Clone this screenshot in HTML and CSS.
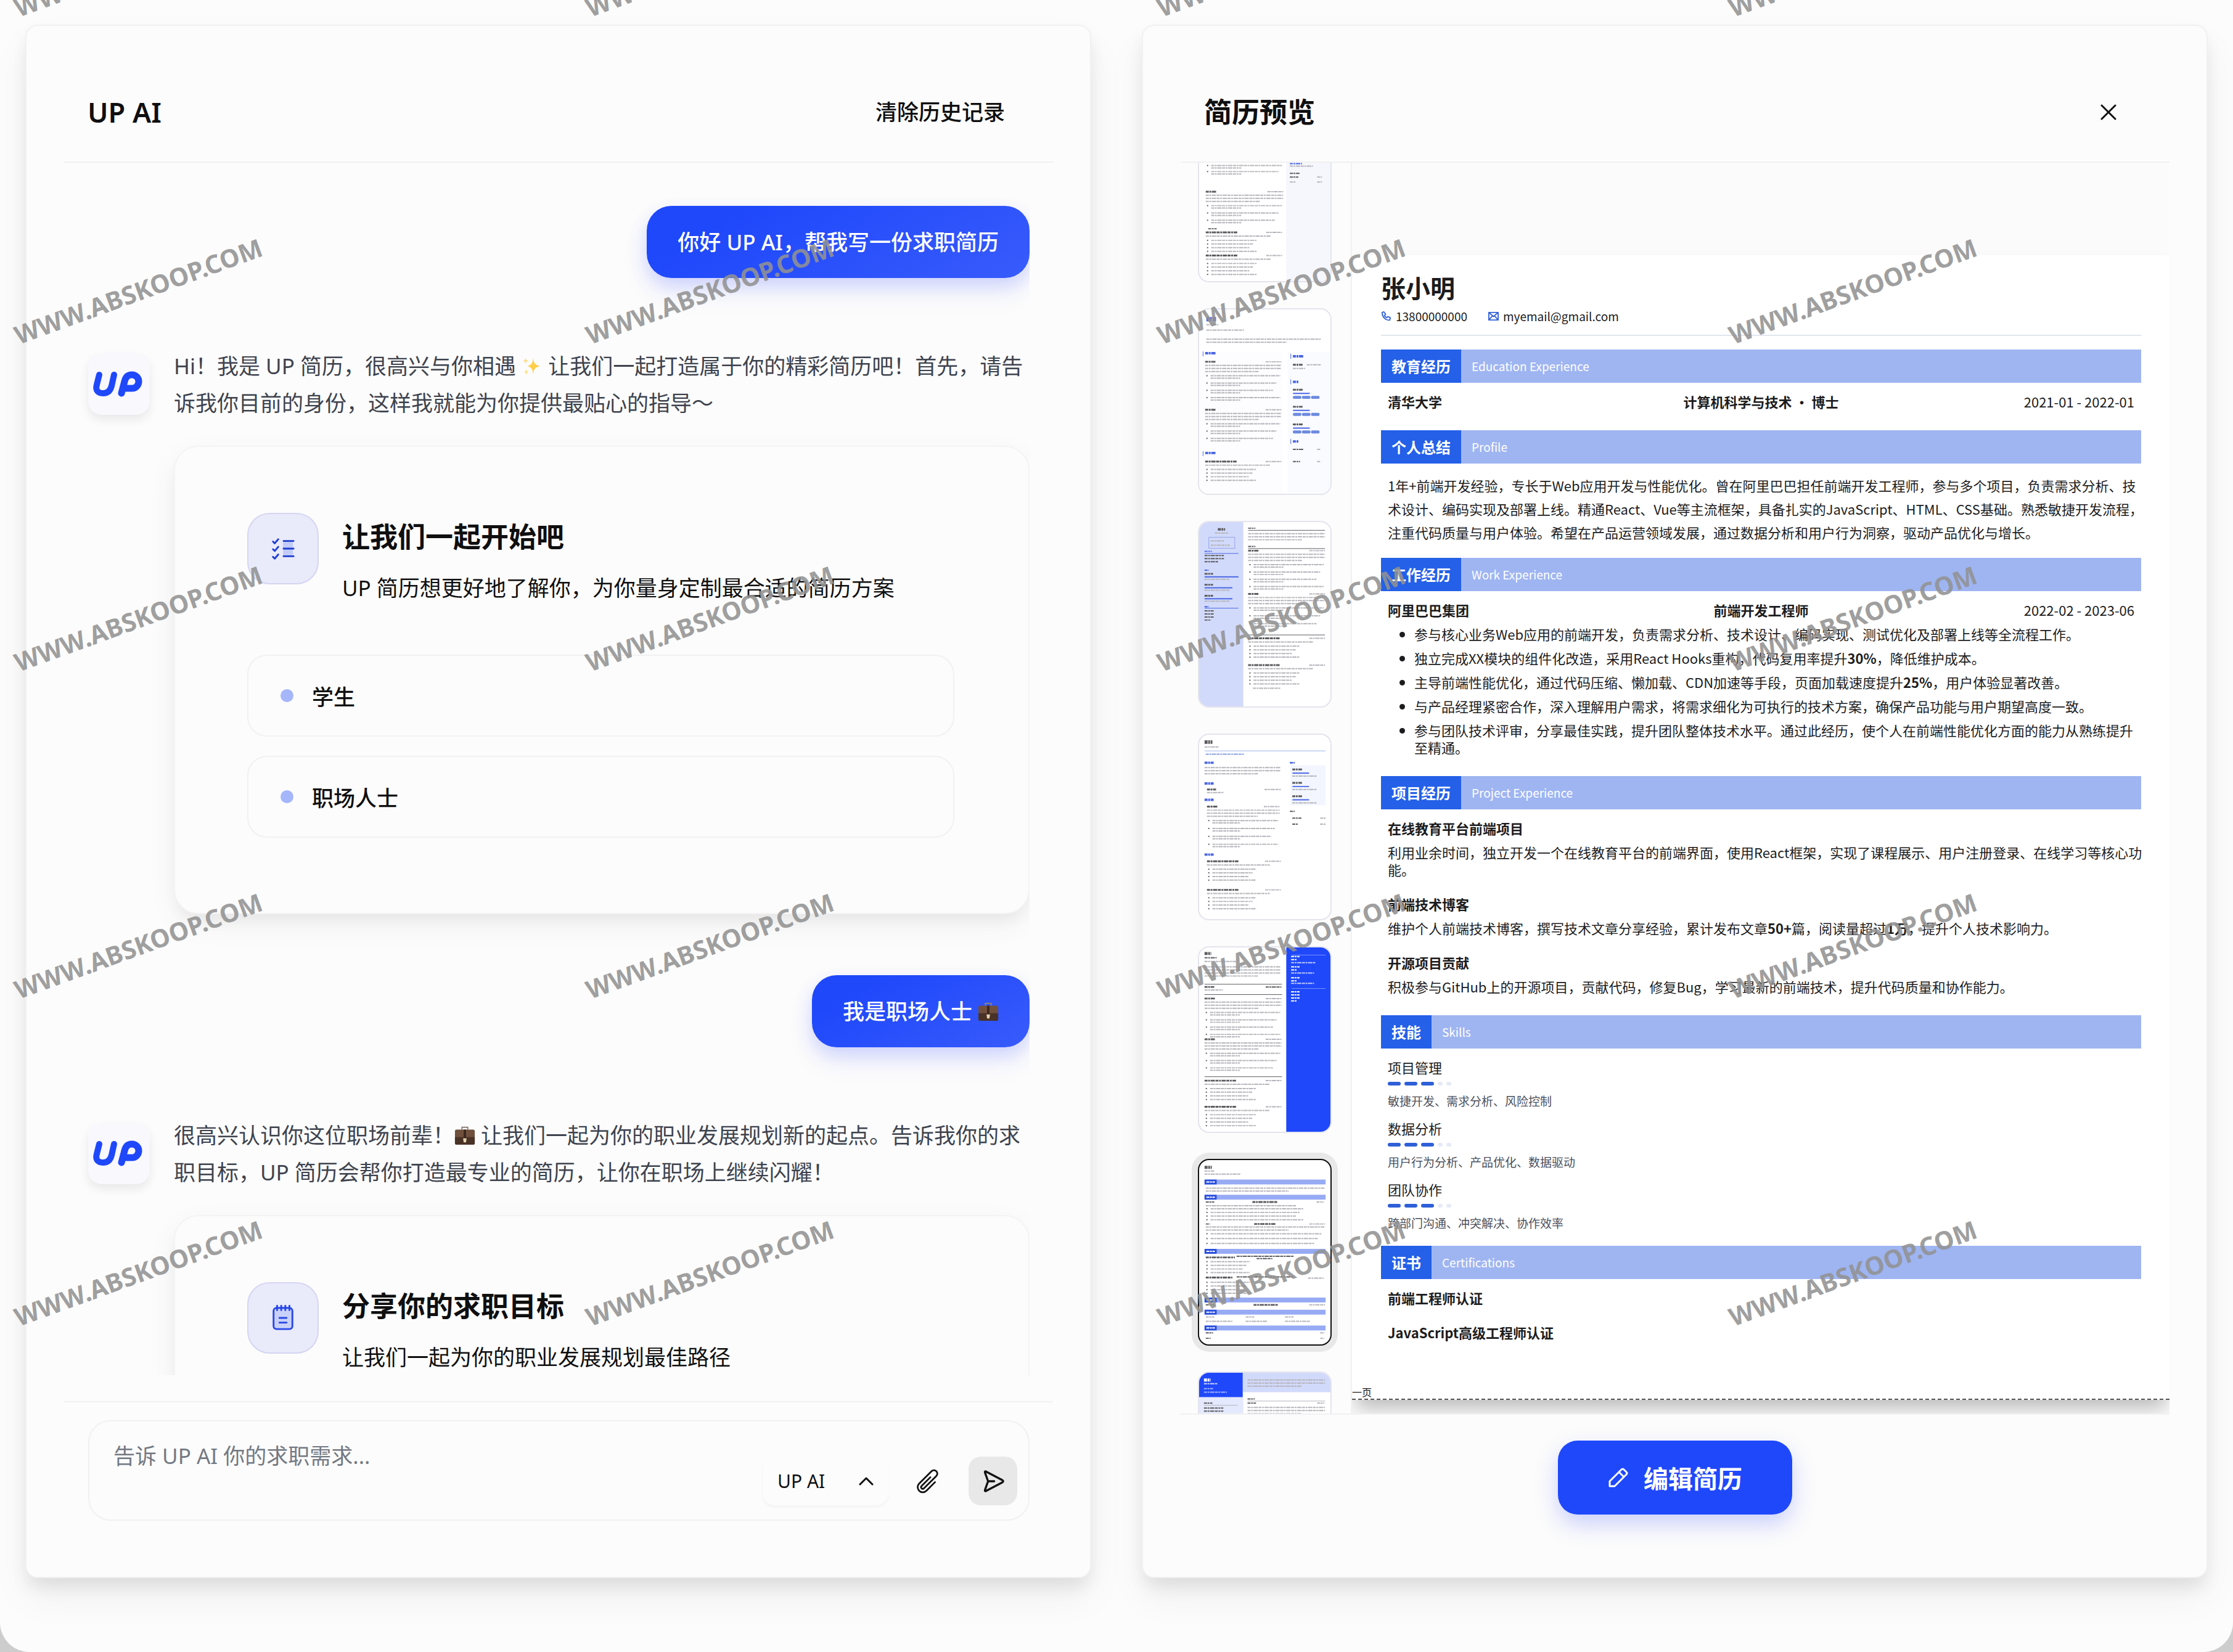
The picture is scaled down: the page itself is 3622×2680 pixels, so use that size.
FILE: index.html
```html
<!DOCTYPE html>
<html lang="zh-CN">
<head>
  <meta charset="UTF-8" />
  <meta name="viewport" content="width=device-width, initial-scale=1.0"/>
  <title>UP AI 简历</title>
  <link rel="stylesheet" href="styles.css">
</head>
<body>

  <!-- 共用图形 -->
  <svg class="defs" aria-hidden="true">
    <symbol id="logo" viewBox="0 0 100 100">
      <g fill="none" stroke="#1f48fb" stroke-linecap="round">
        <path d="M18 35 L14 51 C11 61 17 65 24 65 C31 65 36 61 38 53 L42 35" stroke-width="10"/>
        <path d="M54 65 L59 46 C61 37 66 35 71 35 A11 11 0 1 1 71 57 L62 57" stroke-width="11"/>
      </g>
    </symbol>
    <symbol id="case" viewBox="0 0 36 36">
      <path d="M13 8V4h10v4" fill="none" stroke="#8b8178" stroke-width="2"/>
      <rect x="1" y="8" width="34" height="26" rx="3" fill="#70503c"/>
      <path d="M1 21h34v10a3 3 0 0 1-3 3H4a3 3 0 0 1-3-3z" fill="#4a3227"/>
      <path d="M16 8h4v14h-4z" fill="#3a2820"/>
      <path d="M15 23h6l-1 7h-4z" fill="#e6d3b0"/>
    </symbol>
  </svg>

  <main class="app">
    <section class="panel">
      <header class="panel-head">
        <h1>UP AI</h1>
        <button class="clear-btn" type="button">清除历史记录</button>
      </header>

      <div class="chat">
        <div class="bubble">你好 UP AI，帮我写一份求职简历</div>

        <div class="reply">
          <svg class="avatar" role="img" aria-label="UP"><use href="#logo"/></svg>
          <div class="reply-body">
            <p>Hi！我是 UP 简历，很高兴与你相遇 <svg class="emoji" viewBox="0 0 36 36" aria-hidden="true"><path d="M20 4c1 9 3 12 12 14c-9 2-11 5-12 14c-1-9-3-12-10-14c7-2 9-5 10-14z" fill="#ffcf4a"/><path d="M7 3c.6 4 1.400 5 5 6c-3.600 1-4.400 2-5 6c-.6-4-1.400-5-5-6c3.600-1 4.400-2 5-6zM8 22c.5 4 1 5 4 6c-3 1-3.500 2-4 6c-.5-4-1-5-4-6c3-1 3.500-2 4-6z" fill="#ffe08a"/></svg> 让我们一起打造属于你的精彩简历吧！首先，请告诉我你目前的身份，这样我就能为你提供最贴心的指导～</p>
            <div class="card">
              <div class="card-head">
                <span class="card-icon">
                  <svg viewBox="0 0 44 44" fill="none" stroke="#1f3fd0" stroke-width="3" stroke-linecap="round" stroke-linejoin="round">
                    <path d="M22 9h17v26H22z" fill="#c3ccf8" stroke="none"/>
                    <path d="M23 9h17M23 22h17M23 35h17M5 10l3 3l6-7M5 23l3 3l6-7M5 36l3 3l6-7"/>
                  </svg>
                </span>
                <div>
                  <h2>让我们一起开始吧</h2>
                  <div class="card-desc">UP 简历想更好地了解你，为你量身定制最合适的简历方案</div>
                </div>
              </div>
              <div class="options">
                <button class="option" type="button"><i class="dot"></i>学生</button>
                <button class="option" type="button"><i class="dot"></i>职场人士</button>
              </div>
            </div>
          </div>
        </div>

        <div class="bubble">我是职场人士 <svg class="emoji" role="img" aria-label="公文包"><use href="#case"/></svg></div>

        <div class="reply">
          <svg class="avatar" role="img" aria-label="UP"><use href="#logo"/></svg>
          <div class="reply-body">
            <p>很高兴认识你这位职场前辈！<svg class="emoji" role="img" aria-label="公文包"><use href="#case"/></svg> 让我们一起为你的职业发展规划新的起点。告诉我你的求职目标，UP 简历会帮你打造最专业的简历，让你在职场上继续闪耀！</p>
            <div class="card">
              <div class="card-head">
                <span class="card-icon">
                  <svg viewBox="0 0 44 44" fill="none" stroke="#2747e6" stroke-width="3" stroke-linecap="round" stroke-linejoin="round">
                    <rect x="6" y="5" width="32" height="36" rx="5" fill="#c9d1fa"/>
                    <path d="M12 1v8M19 1v8M26 1v8M33 1v8M16 22h12M16 30h12"/>
                  </svg>
                </span>
                <div>
                  <h2>分享你的求职目标</h2>
                  <div class="card-desc">让我们一起为你的职业发展规划最佳路径</div>
                </div>
              </div>
            </div>
          </div>
        </div>
      </div>

      <form class="composer">
        <div class="composer-box">
          <textarea aria-label="求职需求" placeholder="告诉 UP AI 你的求职需求..."></textarea>
          <div class="tools">
            <label class="model">
              <select aria-label="模型"><option>UP AI</option></select>
              <svg viewBox="0 0 24 24" fill="none" stroke="#111" stroke-width="3" stroke-linecap="round" stroke-linejoin="round"><path d="M2 17L12 7l10 10"/></svg>
            </label>
            <button class="tool-btn" type="button" aria-label="添加附件">
              <svg viewBox="0 0 24 24" fill="none" stroke="#111" stroke-width="1.500" stroke-linecap="round" stroke-linejoin="round"><path d="M18.375 12.739l-7.693 7.693a4.500 4.500 0 0 1-6.364-6.364l10.940-10.940A3 3 0 1 1 19.500 7.372L8.552 18.320a1.500 1.500 0 0 1-2.112-2.130l7.810-7.810"/></svg>
            </button>
            <button class="tool-btn send" type="button" aria-label="发送">
              <svg viewBox="0 0 24 24" fill="none" stroke="#111" stroke-width="2" stroke-linecap="round" stroke-linejoin="round"><path d="M7 12L4 3.500Q3.600 2 5 2.500L21 11Q22.500 12 21 13L5 21.500Q3.600 22 4 20.500L7 12h6"/></svg>
            </button>
          </div>
        </div>
      </form>
    </section>

    <section class="panel">
      <header class="panel-head">
        <h1>简历预览</h1>
        <button class="close-btn" type="button" aria-label="关闭">
          <svg viewBox="0 0 26 26" stroke="#111" stroke-width="3" stroke-linecap="round"><path d="M2 2l22 22M24 2L2 24"/></svg>
        </button>
      </header>

      <div class="preview">
        <div class="thumbs"><div class="thumb-list" id="thumbs"></div></div>

        <div class="canvas">
          <article class="paper">
            <h2 class="name">张小明</h2>
            <div class="contact">
              <span><svg viewBox="0 0 18 18" fill="none" stroke="#3563d8" stroke-width="2" stroke-linejoin="round"><path d="M2 2l3-1l3 4l-2 2q1 3 4 4l2-2l4 2l-1 4q-5 1-9-3t-4-10z"/></svg>13800000000</span>
              <span><svg viewBox="0 0 18 18" fill="none" stroke="#3563d8" stroke-width="2" stroke-linejoin="round"><path d="M1 2h16v13H1zM1 2l8 7l8-7M1 15l6-7M17 15l-6-7"/></svg>myemail@gmail.com</span>
            </div>

            <h3 class="band"><b>教育经历</b><span>Education Experience</span></h3>
            <div class="block">
              <div class="row"><b>清华大学</b><b>计算机科学与技术 ・ 博士</b><span>2021-01 - 2022-01</span></div>
            </div>

            <h3 class="band"><b>个人总结</b><span>Profile</span></h3>
            <div class="block tight">
              <p class="summary">1年+前端开发经验，专长于Web应用开发与性能优化。曾在阿里巴巴担任前端开发工程师，参与多个项目，负责需求分析、技<br>术设计、编码实现及部署上线。精通React、Vue等主流框架，具备扎实的JavaScript、HTML、CSS基础。熟悉敏捷开发流程，<br>注重代码质量与用户体验。希望在产品运营领域发展，通过数据分析和用户行为洞察，驱动产品优化与增长。</p>
            </div>

            <h3 class="band"><b>工作经历</b><span>Work Experience</span></h3>
            <div class="block">
              <div class="row"><b>阿里巴巴集团</b><b>前端开发工程师</b><span>2022-02 - 2023-06</span></div>
              <ul>
                <li>参与核心业务Web应用的前端开发，负责需求分析、技术设计、编码实现、测试优化及部署上线等全流程工作。</li>
                <li>独立完成XX模块的组件化改造，采用React Hooks重构，代码复用率提升<b>30%</b>，降低维护成本。</li>
                <li>主导前端性能优化，通过代码压缩、懒加载、CDN加速等手段，页面加载速度提升<b>25%</b>，用户体验显著改善。</li>
                <li>与产品经理紧密合作，深入理解用户需求，将需求细化为可执行的技术方案，确保产品功能与用户期望高度一致。</li>
                <li>参与团队技术评审，分享最佳实践，提升团队整体技术水平。通过此经历，使个人在前端性能优化方面的能力从熟练提升<br>至精通。</li>
              </ul>
            </div>

            <h3 class="band"><b>项目经历</b><span>Project Experience</span></h3>
            <div class="block list">
              <div class="item">
                <b>在线教育平台前端项目</b>
                <p>利用业余时间，独立开发一个在线教育平台的前端界面，使用React框架，实现了课程展示、用户注册登录、在线学习等核心功<br>能。</p>
              </div>
              <div class="item">
                <b>前端技术博客</b>
                <p>维护个人前端技术博客，撰写技术文章分享经验，累计发布文章<b>50+</b>篇，阅读量超过<b>1万</b>，提升个人技术影响力。</p>
              </div>
              <div class="item">
                <b>开源项目贡献</b>
                <p>积极参与GitHub上的开源项目，贡献代码，修复Bug，学习最新的前端技术，提升代码质量和协作能力。</p>
              </div>
            </div>

            <h3 class="band"><b>技能</b><span>Skills</span></h3>
            <div class="block tight skills">
              <div class="skill">
                <div>项目管理</div>
                <div class="level"><i></i><i></i><i></i><i class="off"></i><i class="off"></i></div>
                <small>敏捷开发、需求分析、风险控制</small>
              </div>
              <div class="skill">
                <div>数据分析</div>
                <div class="level"><i></i><i></i><i></i><i class="off"></i><i class="off"></i></div>
                <small>用户行为分析、产品优化、数据驱动</small>
              </div>
              <div class="skill">
                <div>团队协作</div>
                <div class="level"><i></i><i></i><i></i><i class="off"></i><i class="off"></i></div>
                <small>跨部门沟通、冲突解决、协作效率</small>
              </div>
            </div>

            <h3 class="band"><b>证书</b><span>Certifications</span></h3>
            <div class="block list">
              <b>前端工程师认证</b>
              <b>JavaScript高级工程师认证</b>
            </div>

            <div class="page-end">一页</div>
          </article>
        </div>
      </div>

      <footer class="panel-foot">
        <button class="edit-btn" type="button">
          <svg viewBox="0 0 34 34" fill="none" stroke="#fff" stroke-width="3" stroke-linejoin="round"><path d="M3 31v-8L22 4q2-2 4 0l4 4q2 2 0 4L11 31zM18 8l8 8"/></svg>
          编辑简历
        </button>
      </footer>
    </section>
  </main>

  <div class="watermarks" id="watermarks" aria-hidden="true"></div>

  <script src="script.js"></script>
</body>
</html>
```
FILE: styles.css
```css
* {
  box-sizing: border-box;
}

body {
  margin: 0;
  position: relative;
  background-color: #cdcdcd;
  color: #0f0f10;
  font-family: "Noto Sans", "Noto Sans CJK SC", sans-serif;
  font-size: 35px;
}

h1, h2, h3, p, ul {
  margin: 0;
}

button, select, textarea {
  border: none;
  background: none;
  color: inherit;
  font: inherit;
}

.defs {
  position: absolute;
  width: 0;
  height: 0;
}

.app {
  display: grid;
  grid-template-columns: 1fr 1fr;
  grid-template-rows: minmax(0, 1fr);
  gap: 82px;
  height: 100vh;
  padding: 40px 41px 120px;
  background-color: #fcfcfc;
  border-radius: 0 0 48px 48px;
}

.panel {
  display: flex;
  flex-direction: column;
  min-width: 0;
  padding: 0 60px 0 61px;
  border: 2px solid #f1f1f1;
  border-radius: 20px;
  background-color: #fcfcfc;
  box-shadow: 0 18px 28px -4px rgba(0, 0, 0, 0.09), 0 32px 64px rgba(0, 0, 0, 0.05);
}

.panel-head {
  display: flex;
  justify-content: space-between;
  align-items: center;
  padding: 110px 38px 50px;
  border-bottom: 2px solid #f1f1f1;
  line-height: 60px;
}

.panel-head h1 {
  font-size: 45px;
  font-weight: 600;
}

.clear-btn {
  padding: 0 40px;
  font-weight: 500;
}

.close-btn {
  display: flex;
  padding: 0 48px;
}

.close-btn svg {
  width: 26px;
  height: 26px;
}

/* 聊天 */
.chat {
  flex: 1;
  min-height: 0;
  overflow: hidden;
  margin-right: 38px;
  padding: 70px 0 0 39px;
  display: flex;
  flex-direction: column;
}

.bubble {
  flex: none;
  align-self: flex-end;
  padding: 0 50px;
  border-radius: 40px;
  background: linear-gradient(150deg, #1f48fb 20%, #385bfb);
  box-shadow: 0 14px 30px rgba(60, 80, 250, 0.2), 0 24px 50px rgba(60, 80, 250, 0.06);
  color: #fff;
  font-weight: 500;
  line-height: 117px;
}

.emoji {
  width: 34px;
  height: 34px;
  vertical-align: -4px;
}

.reply {
  flex: none;
  display: flex;
  gap: 39px;
  margin: 113px 0 99px;
}

.avatar {
  flex: none;
  width: 100px;
  height: 100px;
  margin-top: 9px;
  border-radius: 22px;
  background-color: #f8f8fd;
  box-shadow: 0 8px 16px rgba(0, 0, 0, 0.08);
}

.reply-body {
  flex: 1;
}

.reply-body p {
  color: #3e434e;
  line-height: 60px;
}

.card {
  margin-top: 39px;
  height: 760px;
  padding: 107px 120px 0 117px;
  border: 2px solid #f4f4f4;
  border-radius: 40px;
  background-color: #fcfcfc;
  box-shadow: 0 16px 24px -6px rgba(0, 0, 0, 0.05), 0 16px 50px rgba(0, 0, 0, 0.05);
}

.card-head {
  display: flex;
  gap: 38px;
}

.card-icon {
  display: grid;
  place-items: center;
  width: 116px;
  height: 116px;
  border: 2px solid #d5d5f2;
  border-radius: 36px;
  background-color: #e9eafa;
}

.card-icon svg {
  width: 42px;
  height: 42px;
}

.card h2 {
  padding-top: 6px;
  font-size: 45px;
  font-weight: 600;
  line-height: 66px;
}

.card-desc {
  padding-top: 20px;
  line-height: 60px;
}

.options {
  display: flex;
  flex-direction: column;
  gap: 31px;
  margin-top: 78px;
}

.option {
  display: flex;
  align-items: center;
  gap: 30px;
  height: 133px;
  padding: 0 52px;
  border: 2px solid #f1f1f1;
  border-radius: 32px;
  font-weight: 500;
}

.dot {
  width: 21px;
  height: 21px;
  border-radius: 50%;
  background-color: #a5b6fb;
}

.composer {
  margin-top: 42px;
  padding: 29px 38px 91px 39px;
  border-top: 2px solid #f1f1f1;
}

.composer-box {
  display: flex;
  align-items: flex-end;
  height: 163px;
  padding: 22px 18px 23px 39px;
  border: 2px solid #f1f1f1;
  border-radius: 36px;
}

.composer textarea {
  flex: 1;
  align-self: stretch;
  padding: 4px 0;
  resize: none;
  outline: none;
  line-height: 60px;
}

.composer textarea::placeholder {
  color: #737983;
}

.tools {
  display: flex;
  align-items: center;
}

.model {
  display: flex;
  align-items: center;
  width: 204px;
  height: 79px;
  padding: 0 24px;
  border-radius: 20px;
  box-shadow: 0 3px 4px rgba(0, 0, 0, 0.04);
}

.model select {
  flex: 1;
  padding: 0;
  appearance: none;
  font-size: 30px;
}

.model svg {
  width: 24px;
  height: 24px;
}

.tool-btn {
  display: grid;
  place-items: center;
  width: 79px;
  height: 79px;
  margin-left: 24px;
  padding: 0;
  border-radius: 20px;
}

.tool-btn svg {
  width: 44px;
  height: 44px;
}

.tool-btn.send {
  margin-left: 27px;
  background-color: #e8e8e8;
}

.tool-btn.send svg {
  width: 40px;
  height: 40px;
}

/* 预览 */
.preview {
  flex: 1;
  display: flex;
  min-height: 0;
  border-bottom: 2px solid #f1f1f1;
}

.thumbs {
  flex: none;
  width: 278px;
  overflow: hidden;
  border-right: 2px solid #f1f1f1;
}

.thumb-list {
  display: flex;
  flex-direction: column;
  gap: 42px;
  margin-top: -109px;
  padding-left: 28px;
}

.thumb {
  flex: none;
  width: 217px;
  height: 303px;
  padding: 0;
  overflow: hidden;
  border: 2px solid #e4e4ee;
  border-radius: 18px;
  background-color: #fff;
}

.thumb svg {
  display: block;
  width: 213px;
  height: 299px;
}

.thumb.active {
  border-color: #111;
  box-shadow: 0 0 0 10px #e8e8e8;
}

.canvas {
  flex: 1;
  min-width: 0;
  overflow: hidden;
  padding: 150px 0 22px;
  background-color: #fbfbfb;
}

.paper {
  display: flex;
  flex-direction: column;
  height: 100%;
  padding: 25px 46px 0 47px;
  border-bottom: 2px dashed #555;
  background-color: #fff;
  box-shadow: 0 20px 30px -6px rgba(0, 0, 0, 0.25);
  color: #1c1c1e;
  font-family: "Noto Sans CJK SC", sans-serif;
  font-size: 22px;
  line-height: 28px;
}

.paper b {
  font-weight: 700;
}

.paper .name {
  font-size: 40px;
  font-weight: 700;
  line-height: 54px;
}

.contact {
  display: flex;
  gap: 34px;
  margin-bottom: 22px;
  padding: 6px 0 16px;
  border-bottom: 2px solid #e2e6ee;
  font-size: 19px;
}

.contact span {
  display: flex;
  align-items: center;
  gap: 7px;
}

.contact svg {
  width: 17px;
  height: 17px;
}

.band {
  display: flex;
  background-color: #9fb5f2;
  color: #fff;
  font-size: 19px;
  font-weight: 400;
  line-height: 54px;
}

.band b {
  padding: 0 17px;
  background-color: #2460e8;
  font-size: 24px;
}

.band span {
  padding: 0 17px;
}

.block {
  padding: 16px 11px 33px;
  white-space: nowrap;
}

.block.tight {
  padding-bottom: 23px;
}

.row {
  display: grid;
  grid-template-columns: 1fr auto 1fr;
}

.row span {
  text-align: right;
}

.summary {
  line-height: 38px;
}

.block ul {
  display: flex;
  flex-direction: column;
  gap: 11px;
  margin-top: 11px;
  padding-left: 43px;
}

.block.list {
  display: flex;
  flex-direction: column;
  gap: 28px;
}

.item p {
  margin-top: 11px;
}

.skills {
  display: flex;
  flex-direction: column;
  gap: 16px;
}

.level {
  display: flex;
  gap: 6px;
  margin: 10px 0 11px;
}

.level i {
  width: 21px;
  height: 6px;
  border-radius: 3px;
  background-color: #2f5fd8;
}

.level .off {
  width: 8px;
  background-color: #e6e9f7;
}

.skill small {
  display: block;
  color: #4b4f5c;
  font-size: 19px;
}

.page-end {
  margin: auto 0 0 -47px;
  font-size: 16px;
  line-height: 22px;
}

.panel-foot {
  display: flex;
  justify-content: center;
  padding: 42px 0 101px;
}

.edit-btn {
  display: flex;
  align-items: center;
  gap: 24px;
  height: 120px;
  padding: 0 81px;
  border-radius: 32px;
  background-color: #1f48fb;
  box-shadow: 0 16px 36px rgba(60, 80, 250, 0.25);
  color: #fff;
  font-size: 40px;
  font-weight: 700;
}

.edit-btn svg {
  width: 34px;
  height: 34px;
}

/* 水印 */
.watermarks {
  position: absolute;
  inset: 0;
  display: grid;
  grid-template-columns: repeat(4, 927px);
  grid-template-rows: 33px repeat(4, 531px);
  align-items: end;
  padding-left: 32px;
  overflow: hidden;
  pointer-events: none;
}

.watermarks span {
  transform: rotate(-20deg);
  transform-origin: 0 100%;
  color: rgba(146, 146, 146, 0.9);
  font-size: 41px;
  font-weight: 700;
  line-height: 41px;
}
```
FILE: script.js
```js
// 水印: 5 行 4 列
const marks = document.getElementById("watermarks");
for (let i = 0; i < 20; i++) {
  const span = document.createElement("span");
  span.textContent = "WWW.ABSKOOP.COM";
  marks.appendChild(span);
}

// 缩略图 (viewBox 217 x 303)
const GREY = "#b4b4ba";
const DARK = "#5c5c60";
const BLUE = "#4a66e4";

function box(x, y, w, h, color, r = 0) {
  return `<rect x="${x}" y="${y}" width="${w}" height="${h}" rx="${r}" fill="${color}"/>`;
}

function line(x, y, w, color = GREY, h = 2) {
  return `<path d="M${x} ${y}h${w}" stroke="${color}" stroke-width="${h}" stroke-dasharray="5 1 3 1 7 1"/>`;
}

// 一段文字, 最后一行较短
function para(x, y, w, n, color) {
  let out = "";
  for (let i = 0; i < n; i++) {
    out += line(x, y + i * 5, i === n - 1 && n > 1 ? w * 0.7 : w, color);
  }
  return out;
}

// 项目符号列表
function bullets(x, y, w, n, step = 10) {
  let out = "";
  for (let i = 0; i < n; i++) {
    out += box(x, y + i * step - 1, 2, 2, DARK);
    out += line(x + 7, y + i * step, w - 7 - (i % 3) * 6);
    if (step > 8) out += line(x + 7, y + i * step + 4, w * 0.4);
  }
  return out;
}

function job(x, y, w, n, step) {
  return line(x, y, 18, DARK, 3) + line(x + w - 26, y, 26) + para(x, y + 6, w, 3) + bullets(x + 2, y + 23, w - 4, n, step);
}

function project(x, y, w) {
  return line(x, y, 52, DARK, 3) + line(x + w - 26, y, 26) + line(x, y + 6, w * 0.85) + bullets(x + 2, y + 13, w * 0.65, 4, 6);
}

function skill(x, y, tags) {
  let out = line(x, y, 16, DARK, 3) + box(x, y + 5, 28, 2, BLUE, 1);
  if (tags) {
    for (let i = 0; i < 3; i++) out += box(x + i * 15, y + 10, 14, 5, "#6c8ae0", 2);
  } else {
    out += line(x, y + 11, 40);
  }
  return out;
}

const thumbs = [
  box(144, 0, 73, 303, "#f6f7fd") + job(11, 60, 128, 5, 10) + line(150, 110, 20, BLUE) + line(150, 114, 38) +
    line(150, 126, 16, DARK) + line(150, 132, 14, DARK) + line(195, 132, 8) + line(150, 140, 10) + line(195, 140, 8) +
    job(11, 156, 128, 3, 12) + line(15, 217, 14, DARK) + project(11, 223, 126) + project(11, 261, 126),

  box(0, 70, 138, 233, "#fdfdff") + box(146, 70, 71, 233, "#fafbff") + line(12, 16, 16, BLUE, 7) + line(12, 25, 20) + line(12, 34, 62) +
    para(12, 49, 190, 2) + box(6, 69, 1, 8, BLUE) + line(10, 72, 17, BLUE, 4) + job(10, 86, 126, 4, 12) +
    job(10, 165, 126, 3, 12) + box(6, 233, 1, 8, BLUE) + line(10, 236, 17, BLUE, 4) + project(10, 250, 126) +
    box(151, 73, 1, 8, BLUE) + line(155, 77, 18, BLUE, 4) + line(155, 91, 16, DARK, 3) + line(178, 91, 24) + line(155, 97, 20) +
    box(151, 115, 1, 8, BLUE) + line(155, 119, 10, BLUE, 4) + skill(155, 132, true) + skill(155, 160, true) + skill(155, 189, true) +
    box(151, 213, 1, 8, BLUE) + line(155, 217, 10, BLUE, 4) + line(155, 230, 17, DARK) + line(195, 230, 6) + line(155, 250, 12, DARK) + line(195, 250, 6),

  box(0, 0, 73, 303, "#d2dafb") + line(31, 12, 12, DARK, 4) + line(26, 18, 22) +
    '<rect x="16" y="25" width="43" height="18" fill="none" stroke="#93a4e6"/>' + line(19, 31, 22) + line(19, 38, 32) +
    line(9, 48, 12, BLUE) + box(9, 51, 56, 1, BLUE) + para(9, 55, 32, 3, DARK) + line(9, 79, 7, BLUE) +
    line(9, 85, 14, DARK, 3) + box(9, 89, 56, 2, BLUE) + line(9, 94, 42) + line(9, 103, 14, DARK, 3) + box(9, 107, 46, 2, BLUE) + line(9, 112, 42) +
    line(9, 121, 14, DARK, 3) + box(9, 125, 46, 2, BLUE) + line(9, 130, 42) + line(9, 139, 7, BLUE) + box(9, 141, 56, 1, BLUE) + para(9, 146, 15, 4, DARK) +
    line(81, 10, 12, DARK) + box(81, 13, 127, 1, DARK) + para(81, 19, 127, 3) + line(81, 40, 12, DARK) + box(81, 43, 127, 1, DARK) +
    job(81, 47, 127, 4, 12) + job(81, 118, 127, 3, 13) + box(81, 185, 127, 1, DARK) + project(81, 191, 127) + project(81, 235, 127) + line(89, 273, 46),

  line(9, 12, 13, DARK, 6) + line(9, 20, 24) + box(9, 26, 200, 1, "#9db4ee") + line(11, 32, 64, "#8aa2e2") +
    line(9, 46, 15, BLUE, 4) + para(9, 54, 126, 3) + line(9, 80, 15, BLUE, 4) + line(13, 90, 15, DARK, 3) + line(108, 90, 27) + line(13, 95, 27) +
    line(9, 107, 15, BLUE, 4) + job(13, 118, 120, 4, 13) + line(9, 197, 15, BLUE, 4) + project(13, 208, 122) + project(13, 255, 122) +
    box(151, 50, 58, 66, "#f3f6fe") + line(150, 46, 8, BLUE, 3) + skill(154, 57) + skill(154, 79) + skill(154, 101) +
    line(150, 126, 8, DARK) + line(154, 137, 15, DARK) + line(200, 137, 9) + line(154, 147, 10, DARK) + line(200, 147, 9),

  box(144, 0, 73, 303, "#1f48fb") + box(153, 12, 56, 1, "#7d95fd") + para(152, 15, 14, 2, "#fff") + line(152, 25, 40, "#bcc8ff") +
    para(152, 32, 14, 2, "#fff") + line(152, 42, 38, "#bcc8ff") + para(152, 50, 14, 2, "#fff") + line(152, 59, 38, "#bcc8ff") + box(153, 67, 56, 1, "#7d95fd") + para(152, 73, 14, 4, "#fff") +
    line(9, 10, 11, DARK, 5) + line(9, 17, 20, DARK) + line(9, 23, 52) + para(9, 32, 126, 4) + box(9, 60, 128, 1, DARK) + line(9, 65, 16, DARK, 3) + line(110, 65, 26, DARK) + line(9, 70, 30) +
    box(9, 77, 128, 1, DARK) + job(9, 84, 127, 4, 12) + job(9, 151, 127, 3, 12) + box(9, 212, 128, 1, DARK) + project(9, 219, 127) + project(9, 262, 127),

  line(9, 12, 12, DARK, 5) + line(9, 18, 16) + line(9, 23, 60) +
    [32, 57, 146, 226, 246, 272].map((y) => box(9, y, 200, 8, "#97aaf4") + box(9, y, 20, 8, "#2a4fe0") + line(12, y + 4, 14, "#fff")).join("") +
    para(11, 46, 196, 2) + line(11, 69, 14, DARK) + line(88, 69, 42, DARK, 3) + line(194, 69, 12) + line(11, 75, 150) + bullets(12, 80, 160, 4, 6) +
    line(11, 105, 7, DARK) + line(91, 105, 36, DARK, 3) + line(182, 105, 26) + para(11, 110, 196, 2) + bullets(12, 121, 190, 3, 8) +
    line(11, 160, 48, DARK, 3) + line(62, 158, 94, DARK) + line(95, 162, 26, DARK) + bullets(12, 167, 72, 4, 6) +
    line(11, 193, 44, DARK, 3) + line(62, 192, 94, DARK) + line(180, 194, 26) + bullets(12, 201, 72, 4, 6) +
    line(11, 238, 14, DARK) + line(90, 238, 40, DARK, 3) + line(182, 238, 26) +
    line(11, 258, 14) + line(77, 258, 14) + line(142, 258, 14) + line(11, 265, 44) + line(77, 265, 36) + line(142, 265, 42) +
    line(11, 284, 12, DARK) + line(200, 284, 7) + line(11, 293, 8, DARK) + line(200, 293, 7),

  box(0, 0, 217, 32, "#d2dafb") + box(0, 32, 73, 271, "#e4e9fd") + box(0, 0, 72, 40, "#1f48fb") + line(8, 12, 11, "#fff", 5) + line(8, 18, 22, "#c9d3ff") +
    line(8, 26, 15, "#9fb0ff") + line(8, 32, 38, "#9fb0ff") + para(80, 12, 128, 3) + line(8, 50, 14, DARK) + box(8, 53, 56, 1, GREY) + para(8, 58, 32, 3, DARK) +
    line(80, 43, 12, DARK) + box(80, 46, 128, 1, GREY) + line(80, 50, 14, DARK) + line(195, 50, 12) + para(80, 57, 128, 3),
];

document.getElementById("thumbs").innerHTML = thumbs
  .map((art, i) => `<button class="thumb${i === 5 ? " active" : ""}" type="button" aria-label="模板 ${i + 1}"><svg viewBox="0 0 217 303" preserveAspectRatio="none">${art}</svg></button>`)
  .join("");
```
